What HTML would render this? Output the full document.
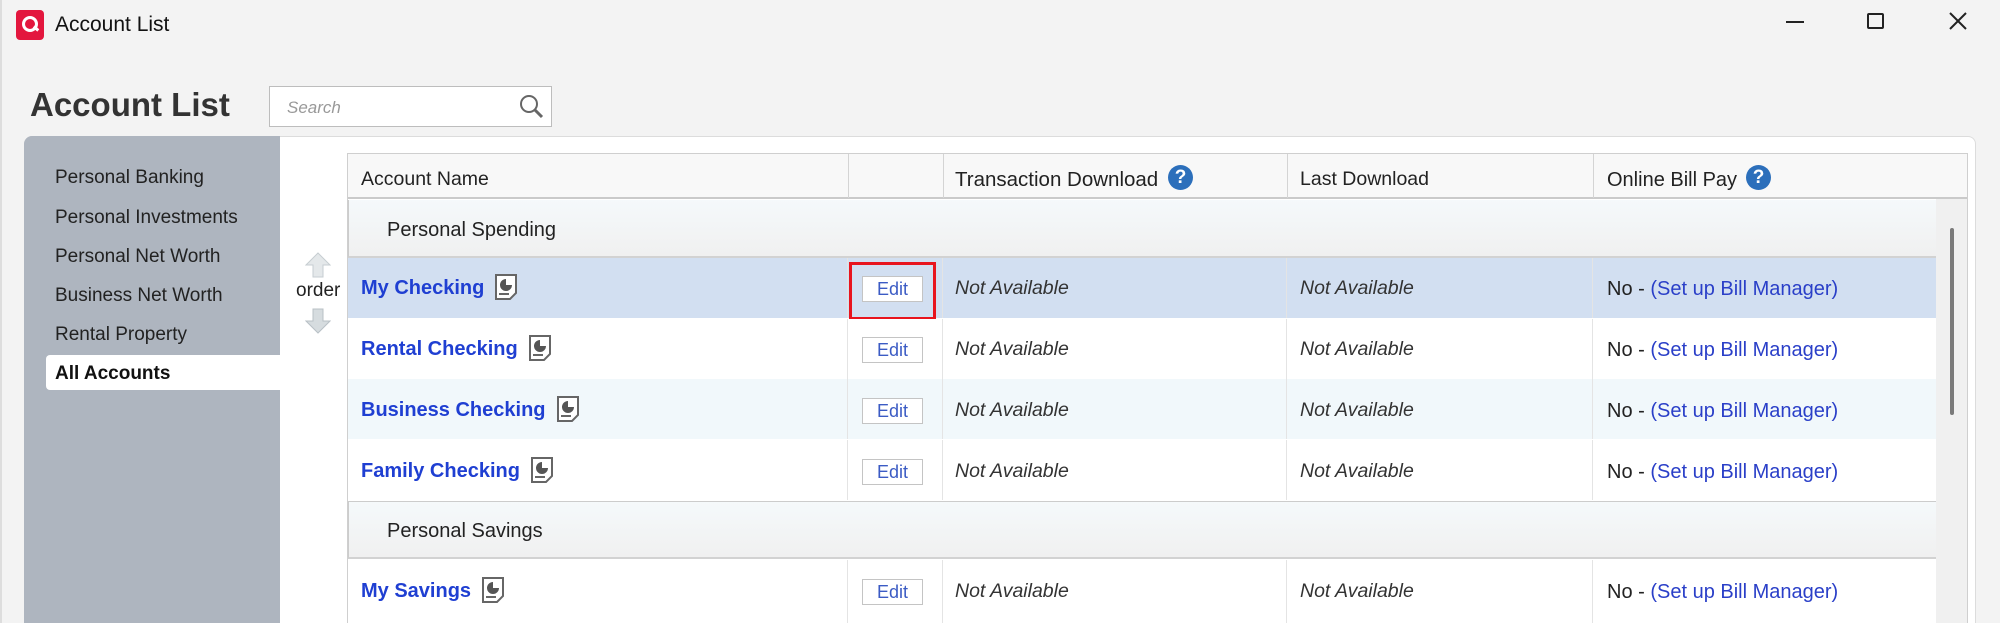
<!DOCTYPE html>
<html style="width:2000px;height:623px;overflow:hidden"><head><meta charset="utf-8">
<style>
*{margin:0;padding:0;box-sizing:border-box}
body{width:2000px;height:623px;overflow:hidden;background:#f3f3f3;font-family:"Liberation Sans",Arial,sans-serif;position:relative;color:#222}
.a{position:absolute}
.t{font-size:19px;white-space:nowrap;line-height:1}
.side{left:55px}
.row{position:absolute;left:348px;width:1588px;height:60px}
.cell{position:absolute;top:0;height:100%;border-right:1px solid #e4e4e4}
.nm{position:absolute;left:13px;font-weight:bold;font-size:20px;color:#1f3fd2;white-space:nowrap;line-height:1;display:flex;align-items:center}
.nm svg{margin-left:11px;margin-top:-2px}
.na{position:absolute;font-style:italic;font-size:19.5px;color:#333;white-space:nowrap;line-height:1}
.edit{position:absolute;left:514px;width:61px;height:26px;background:#fff;border:1px solid #c4c4c4;color:#3b5bc4;font-size:18px;text-align:center;line-height:24px}
.bp{position:absolute;left:1259px;font-size:20px;white-space:nowrap;line-height:1;color:#222}
.bp span{color:#2a3fc8}
.grp{position:absolute;left:348px;width:1588px;height:58px;background:linear-gradient(#f5f9fb,#f0f0f0);border-bottom:2px solid #d2d2d2;border-left:1px solid #ccc}
.q{position:absolute;width:25px;height:25px;border-radius:50%;background:#2c6fbb;color:#fff;font-weight:bold;font-size:19px;text-align:center;line-height:25px}
.h{font-size:19.5px}
</style></head><body>
<div class="a" style="left:0;top:0;width:2px;height:623px;background:#ddd"></div>
<div class="a" style="left:16px;top:10px;width:28px;height:30px;background:#e3173e;border-radius:4px"></div>
<div class="a" style="left:22px;top:16px;width:16px;height:16px;border:3px solid #fff;border-radius:50%"></div>
<div class="a" style="left:33px;top:27px;width:6px;height:3px;background:#fff;transform:rotate(40deg)"></div>
<div class="a t" style="left:55px;top:14px;font-size:21px;color:#111">Account List</div>
<div class="a" style="left:1786px;top:21px;width:18px;height:2px;background:#222"></div>
<div class="a" style="left:1867px;top:13px;width:17px;height:16px;border:2px solid #222;border-radius:2px"></div>
<svg class="a" style="left:1948px;top:11px" width="20" height="20"><path d="M2 2L18 18M18 2L2 18" stroke="#222" stroke-width="2"/></svg>
<div class="a" style="left:30px;top:88px;font-size:33px;font-weight:bold;color:#333;line-height:1">Account List</div>
<div class="a" style="left:269px;top:86px;width:283px;height:41px;background:#fff;border:1px solid #bdbdbd"></div>
<div class="a" style="left:287px;top:98px;font-size:17px;font-style:italic;color:#999">Search</div>
<svg class="a" style="left:518px;top:93px" width="28" height="28"><circle cx="11" cy="11" r="8" fill="none" stroke="#666" stroke-width="2"/><path d="M17 17L24 24" stroke="#666" stroke-width="3"/></svg>
<div class="a" style="left:24px;top:136px;width:1952px;height:487px;background:#fff;border:1px solid #dcdcdc;border-bottom:none;border-radius:8px 8px 0 0"></div>
<div class="a" style="left:24px;top:136px;width:256px;height:487px;background:#aeb5bf;border-radius:8px 0 0 0"></div>
<div class="a t side" style="top:168px">Personal Banking</div>
<div class="a t side" style="top:208px">Personal Investments</div>
<div class="a t side" style="top:247px">Personal Net Worth</div>
<div class="a t side" style="top:286px">Business Net Worth</div>
<div class="a t side" style="top:325px">Rental Property</div>
<div class="a" style="left:46px;top:355px;width:234px;height:35px;background:#fff;border-radius:4px 0 0 4px"></div>
<div class="a t side" style="top:364px;font-weight:bold;color:#111">All Accounts</div>
<svg class="a" style="left:305px;top:252px" width="26" height="26"><path d="M13 1L25 13H18V25H8V13H1Z" fill="#e4e8ea" stroke="#c6cdd1"/></svg>
<div class="a t" style="left:296px;top:281px;font-size:19px">order</div>
<svg class="a" style="left:305px;top:308px" width="26" height="26"><path d="M8 1H18V13H25L13 25L1 13H8Z" fill="#d6dcdf" stroke="#b8c0c5"/></svg>
<div class="a" style="left:347px;top:153px;width:1621px;height:470px;border:1px solid #cfcfcf;border-bottom:none"></div>
<div class="a" style="left:348px;top:154px;width:1619px;height:45px;background:#f8f8f8;border-bottom:2px solid #cacaca"></div>
<div class="a" style="left:848px;top:154px;width:1px;height:44px;background:#d4d4d4"></div>
<div class="a" style="left:943px;top:154px;width:1px;height:44px;background:#d4d4d4"></div>
<div class="a" style="left:1287px;top:154px;width:1px;height:44px;background:#d4d4d4"></div>
<div class="a" style="left:1593px;top:154px;width:1px;height:44px;background:#d4d4d4"></div>
<div class="a t h" style="left:361px;top:170px">Account Name</div>
<div class="a t" style="left:955px;top:170px;font-size:20.5px">Transaction Download</div>
<div class="q" style="left:1168px;top:165px">?</div>
<div class="a t h" style="left:1300px;top:170px">Last Download</div>
<div class="a t" style="left:1607px;top:170px;font-size:20px">Online Bill Pay</div>
<div class="q" style="left:1746px;top:165px">?</div>
<div class="a" style="left:1936px;top:199px;width:31px;height:424px;background:#f0f0f0"></div>
<div class="a" style="left:1950px;top:228px;width:4px;height:187px;background:#7a7a7a;border-radius:2px"></div>

<div class="grp" style="top:200px"><div class="a t" style="left:38px;top:20px;font-size:20px">Personal Spending</div></div>

<div class="row" style="top:258px;background:#d2dff1">
 <div class="cell" style="left:0;width:500px"></div><div class="cell" style="left:500px;width:95px"></div><div class="cell" style="left:595px;width:344px"></div><div class="cell" style="left:939px;width:306px"></div>
 <div class="nm" style="top:18px">My Checking<svg width="22" height="26"><path d="M1 1H21V19L15 25H1Z" fill="#fff" stroke="#666" stroke-width="2"/><path d="M11 5A6 6 0 1 0 17 11H11Z" fill="#555"/><path d="M4 20H14" stroke="#666" stroke-width="2"/></svg></div>
 <div class="a" style="left:501px;top:4px;width:87px;height:58px;border:3px solid #e8141e"></div>
 <div class="edit" style="top:18px">Edit</div>
 <div class="na" style="left:607px;top:21px">Not Available</div><div class="na" style="left:952px;top:21px">Not Available</div>
 <div class="bp" style="top:21px">No - <span>(Set up Bill Manager)</span></div>
</div>
<div class="row" style="top:319px;background:#fff">
 <div class="cell" style="left:0;width:500px"></div><div class="cell" style="left:500px;width:95px"></div><div class="cell" style="left:595px;width:344px"></div><div class="cell" style="left:939px;width:306px"></div>
 <div class="nm" style="top:18px">Rental Checking<svg width="22" height="26"><path d="M1 1H21V19L15 25H1Z" fill="#fff" stroke="#666" stroke-width="2"/><path d="M11 5A6 6 0 1 0 17 11H11Z" fill="#555"/><path d="M4 20H14" stroke="#666" stroke-width="2"/></svg></div>
 <div class="edit" style="top:18px">Edit</div>
 <div class="na" style="left:607px;top:21px">Not Available</div><div class="na" style="left:952px;top:21px">Not Available</div>
 <div class="bp" style="top:21px">No - <span>(Set up Bill Manager)</span></div>
</div>
<div class="row" style="top:379px;background:#f1f8fb">
 <div class="cell" style="left:0;width:500px"></div><div class="cell" style="left:500px;width:95px"></div><div class="cell" style="left:595px;width:344px"></div><div class="cell" style="left:939px;width:306px"></div>
 <div class="nm" style="top:19px">Business Checking<svg width="22" height="26"><path d="M1 1H21V19L15 25H1Z" fill="#fff" stroke="#666" stroke-width="2"/><path d="M11 5A6 6 0 1 0 17 11H11Z" fill="#555"/><path d="M4 20H14" stroke="#666" stroke-width="2"/></svg></div>
 <div class="edit" style="top:19px">Edit</div>
 <div class="na" style="left:607px;top:22px">Not Available</div><div class="na" style="left:952px;top:22px">Not Available</div>
 <div class="bp" style="top:22px">No - <span>(Set up Bill Manager)</span></div>
</div>
<div class="row" style="top:440px;background:#fff">
 <div class="cell" style="left:0;width:500px"></div><div class="cell" style="left:500px;width:95px"></div><div class="cell" style="left:595px;width:344px"></div><div class="cell" style="left:939px;width:306px"></div>
 <div class="nm" style="top:19px">Family Checking<svg width="22" height="26"><path d="M1 1H21V19L15 25H1Z" fill="#fff" stroke="#666" stroke-width="2"/><path d="M11 5A6 6 0 1 0 17 11H11Z" fill="#555"/><path d="M4 20H14" stroke="#666" stroke-width="2"/></svg></div>
 <div class="edit" style="top:19px">Edit</div>
 <div class="na" style="left:607px;top:22px">Not Available</div><div class="na" style="left:952px;top:22px">Not Available</div>
 <div class="bp" style="top:22px">No - <span>(Set up Bill Manager)</span></div>
</div>
<div class="grp" style="top:501px;border-top:1px solid #ccc"><div class="a t" style="left:38px;top:19px;font-size:20px">Personal Savings</div></div>
<div class="row" style="top:560px;height:63px;background:#fff">
 <div class="cell" style="left:0;width:500px"></div><div class="cell" style="left:500px;width:95px"></div><div class="cell" style="left:595px;width:344px"></div><div class="cell" style="left:939px;width:306px"></div>
 <div class="nm" style="top:19px">My Savings<svg width="22" height="26"><path d="M1 1H21V19L15 25H1Z" fill="#fff" stroke="#666" stroke-width="2"/><path d="M11 5A6 6 0 1 0 17 11H11Z" fill="#555"/><path d="M4 20H14" stroke="#666" stroke-width="2"/></svg></div>
 <div class="edit" style="top:19px">Edit</div>
 <div class="na" style="left:607px;top:22px">Not Available</div><div class="na" style="left:952px;top:22px">Not Available</div>
 <div class="bp" style="top:22px">No - <span>(Set up Bill Manager)</span></div>
</div>
</body></html>
